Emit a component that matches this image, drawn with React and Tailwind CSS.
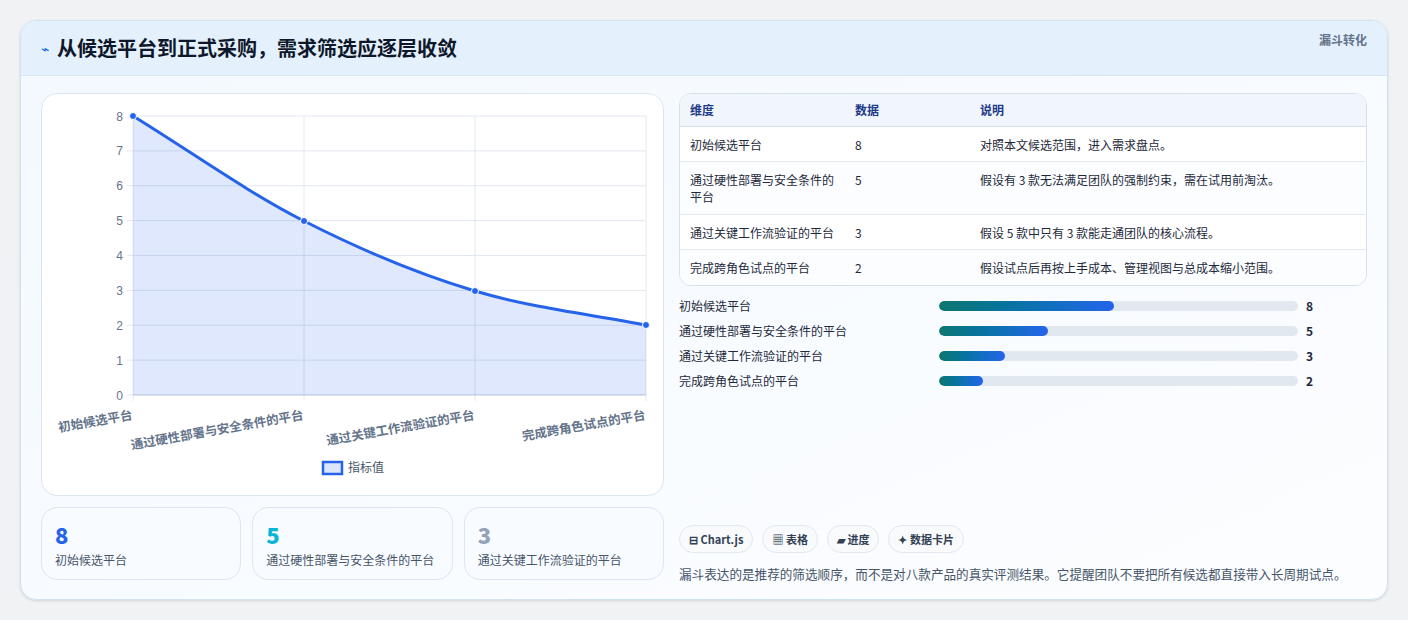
import React from "react";

const font = { fontFamily: '"Noto Sans CJK SC", "Noto Sans", sans-serif' };

const rows = [
  ["初始候选平台", "8", "对照本文候选范围，进入需求盘点。", "h-[35px]"],
  ["通过硬性部署与安全条件的平台", "5", "假设有 3 款无法满足团队的强制约束，需在试用前淘汰。", "h-[53px]"],
  ["通过关键工作流验证的平台", "3", "假设 5 款中只有 3 款能走通团队的核心流程。", "h-[35px]"],
  ["完成跨角色试点的平台", "2", "假设试点后再按上手成本、管理视图与总成本缩小范围。", "h-[35px]"],
];

function Chart() {
  const ys = [8, 7, 6, 5, 4, 3, 2, 1, 0];
  const xs = [131, 302, 473, 644];
  const pts = [[131, 115], [302, 220], [473, 290], [644, 324]];
  const line = "M131 115 C188 150 245 191 302 220 C359 249 416 273 473 290 C530 307 587 313 644 324";
  const labels = ["初始候选平台", "通过硬性部署与安全条件的平台", "通过关键工作流验证的平台", "完成跨角色试点的平台"];
  return (
    <svg width="623" height="403" viewBox="40 93 623 403" className="block">
      {ys.map((v) => {
        const y = 394 - v * 34.875;
        return (
          <g key={v}>
            <line x1="125" x2="644" y1={y} y2={y} stroke="#e2e8f0" strokeWidth="1" />
            <text x="121" y={y + 4.5} textAnchor="end" fontSize="12" fill="#64748b" fontFamily="Liberation Sans, sans-serif">{v}</text>
          </g>
        );
      })}
      {xs.map((x) => (
        <line key={x} x1={x} x2={x} y1="115" y2="400" stroke="#e2e8f0" strokeWidth="1" />
      ))}
      <line x1="131" x2="644" y1="394" y2="394" stroke="#cbd5e1" />
      <path d={line + " L644 394 L131 394 Z"} fill="rgba(37,99,235,0.15)" />
      <path d={line} fill="none" stroke="#2563eb" strokeWidth="3" />
      {pts.map(([x, y]) => (
        <circle key={x} cx={x} cy={y} r="3.5" fill="#2563eb" stroke="#fff" strokeWidth="1" />
      ))}
      {labels.map((l, i) => (
        <text key={i} x={xs[i]} y={418} textAnchor="end" fontSize="12.5" fontWeight="600" fill="#64748b" transform={`rotate(-10 ${xs[i]} 418)`} style={font}>{l}</text>
      ))}
      <rect x="321" y="461" width="19" height="12" fill="#dbe5fb" stroke="#2563eb" strokeWidth="2.5" />
      <text x="346" y="471" fontSize="12" fill="#475569" style={font}>指标值</text>
    </svg>
  );
}

export default function App() {
  const bars = [["初始候选平台", 8], ["通过硬性部署与安全条件的平台", 5], ["通过关键工作流验证的平台", 3], ["完成跨角色试点的平台", 2]];
  return (
    <div className="w-[1408px] h-[620px] bg-[#f1f2f4] p-5 pb-0" style={font}>
      <div className="h-[580px] rounded-2xl border border-[#cfe3f2] bg-gradient-to-br from-[#f3f9ff] to-[#fcfdff] overflow-hidden shadow-sm">
        <div className="h-[55px] flex items-center justify-between px-5 bg-[#e4f1fd] border-b border-[#d4e6f6]">
          <div className="flex items-center gap-2">
            <span className="text-[#2563eb] text-sm">⌁</span>
            <span className="text-[20px] font-bold text-[#0f172a]">从候选平台到正式采购，需求筛选应逐层收敛</span>
          </div>
          <span className="text-xs font-bold text-[#64748b] -mt-4">漏斗转化</span>
        </div>
        <div className="flex gap-[15px] px-5 pt-[17px]">
          <div className="w-[623px] flex flex-col gap-[11px]">
            <div className="h-[403px] rounded-2xl border border-[#dbe6f2] bg-white overflow-hidden">
              <Chart />
            </div>
            <div className="flex gap-[11px]">
              {[["8", "text-[#2563eb]", "初始候选平台"], ["5", "text-[#06b6d4]", "通过硬性部署与安全条件的平台"], ["3", "text-[#94a3b8]", "通过关键工作流验证的平台"]].map(([n, c, l]) => (
                <div key={n} className="flex-1 h-[73px] rounded-2xl border border-[#dbe6f2] bg-[#f8fbff] px-[13px] pt-[12px]">
                  <div className={`text-[22px] font-extrabold leading-7 ${c}`}>{n}</div>
                  <div className="text-xs text-[#475569] mt-1">{l}</div>
                </div>
              ))}
            </div>
          </div>
          <div className="flex-1 flex flex-col">
            <div className="rounded-xl border border-[#d5e0ec] bg-white overflow-hidden text-xs text-[#1e293b]">
              <div className="flex h-[33px] items-center bg-[#f1f6fd] border-b border-[#d5e0ec] font-bold text-[#1e3a8a]">
                <div className="w-[175px] pl-[10px]">维度</div>
                <div className="w-[125px]">数据</div>
                <div>说明</div>
              </div>
              {rows.map((r, i) => (
                <div key={i} className={`flex pt-[9px] leading-[17px] ${r[3]} ${i < 3 ? "border-b border-[#e2e8f0]" : ""} ${i % 2 === 1 ? "bg-[#fbfdff]" : ""}`}>
                  <div className="w-[175px] pl-[10px] pr-3">{r[0]}</div>
                  <div className="w-[125px]">{r[1]}</div>
                  <div>{r[2]}</div>
                </div>
              ))}
            </div>
            <div className="flex flex-col gap-[11px] mt-[13px]">
              {bars.map(([l, v]) => (
                <div key={l} className="flex items-center h-[14px] text-xs text-[#1e293b]">
                  <div className="w-[260px]">{l}</div>
                  <div className="w-[359px] h-[10px] rounded-full bg-[#e2e8f0] overflow-hidden">
                    <div className="h-full rounded-full bg-gradient-to-r from-[#0f766e] to-[#2563eb]" style={{ width: `${(v / 16.4) * 100}%` }} />
                  </div>
                  <div className="ml-2 font-bold">{v}</div>
                </div>
              ))}
            </div>
            <div className="flex gap-[9px] mt-[137px]">
              {["⊟ Chart.js", "▦ 表格", "▰ 进度", "✦ 数据卡片"].map((t) => (
                <div key={t} className="h-[28px] px-[9px] flex items-center rounded-full border border-[#e2e8f0] bg-[#f8fafc] text-[11px] font-bold text-[#334155]">{t}</div>
              ))}
            </div>
            <div className="mt-[12px] text-[12.6px] whitespace-nowrap text-[#475569]">漏斗表达的是推荐的筛选顺序，而不是对八款产品的真实评测结果。它提醒团队不要把所有候选都直接带入长周期试点。</div>
          </div>
        </div>
      </div>
    </div>
  );
}
